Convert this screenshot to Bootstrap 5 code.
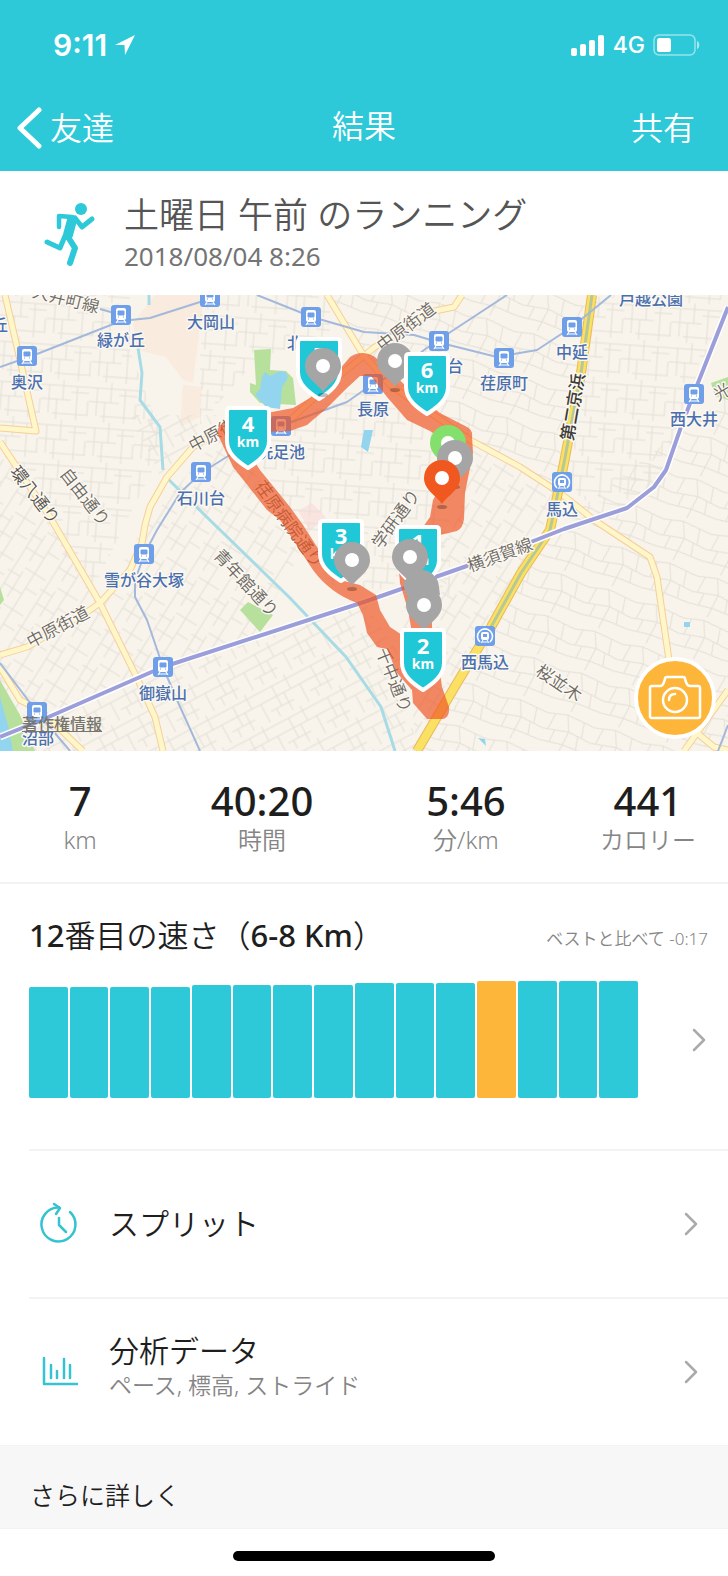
<!DOCTYPE html>
<html lang="ja">
<head>
<meta charset="utf-8">
<meta name="viewport" content="width=device-width, initial-scale=1">
<title>結果</title>
<link href="https://cdn.jsdelivr.net/npm/bootstrap@5.3.0/dist/css/bootstrap.min.css" rel="stylesheet">
<style>
  :root { --teal: #2dc9d9; --amber: #feb63a; --ink: #1e1e1e; --muted: #858585; --line: #f3f3f4; }
  body { font-family: "Noto Sans", "Noto Sans CJK JP", sans-serif; color: var(--ink); background: #fff; }
  a { color: inherit; text-decoration: none; }
  .app-header { background: var(--teal); color: #fff; }
  .status-bar { padding: 24px 28px 0 53px; height: 66px; font-family: Inter, "Liberation Sans", sans-serif; }
  .clock { font-size: 30px; font-weight: 600; line-height: 42px; }
  .network { font-size: 23px; font-weight: 500; line-height: 42px; }
  .title-bar { height: 105px; padding: 38px 17px 0; font-size: 32px; line-height: 48px; font-weight: 350; }
  .title-bar h1 { font-size: 32px; line-height: 44px; font-weight: 350; }
  .share-btn { font-weight: 350; }
  .title-side { flex: 1 1 0; }
  .run-head { padding: 20px 24px 20px 40px; height: 124px; }
  .run-icon { width: 56px; margin-right: 28px; }
  .run-title { font-size: 35px; line-height: 48px; font-weight: 350; color: #555; }
  .run-date { font-size: 26px; line-height: 34px; color: #747474; }
  .map-svg { display: block; width: 100%; height: auto; }
  .station { font-size: 16px; font-weight: 500; fill: #4a6fae; text-anchor: middle; }
  .street { font-size: 17px; font-weight: 350; fill: #6d6962; text-anchor: middle; }
  .halo { stroke: #fbf8f2; stroke-width: 3px; paint-order: stroke; stroke-linejoin: round; }
  .km-num { font-size: 22px; font-weight: 700; fill: #fff; text-anchor: middle; }
  .km-unit { font-size: 14px; font-weight: 700; fill: #fff; text-anchor: middle; }
  .map-legal { left: 22px; bottom: 15px; font-size: 16px; line-height: 24px; font-weight: 500; color: #77756b; text-decoration: underline; }
  .camera-btn { right: 12px; bottom: 12px; width: 82px; height: 82px; background: var(--amber); border: 4px solid #fff; }
  .stats { padding: 24px 0 24px; height: 133px; border-bottom: 2px solid var(--line); }
  .stat-side { flex: 0 0 22%; }
  .stat-mid { flex: 0 0 28%; }
  .stat-value { font-size: 40px; line-height: 52px; font-weight: 500; }
  .stat-label { font-size: 24px; line-height: 26px; font-weight: 350; color: var(--muted); }
  .pace { padding: 29px 20px 51px 29px; }
  .pace h2 { font-size: 31px; line-height: 44px; font-weight: 350; }
  .pace h2 span { font-weight: 500; }
  .best { font-size: 17px; line-height: 24px; font-weight: 350; color: var(--muted); }
  .chart { height: 117px; gap: 2px; margin-right: 54px; }
  .pace-bar { flex: 1 1 0; background: var(--teal); border-radius: 2px; }
  .pace-bar.current { background: var(--amber); }
  .menu-row { margin-left: 29px; padding-right: 29px; height: 148px; border-top: 2px solid var(--line); }
  .menu-icon { width: 60px; flex: none; margin-right: 20px; }
  .menu-title { font-size: 30px; line-height: 40px; font-weight: 350; }
  .menu-note { font-size: 23px; line-height: 28px; font-weight: 350; color: var(--muted); }
  .menu-pair { padding-bottom: 14px; }
  .more { background: #f7f7f7; border: solid var(--line); border-width: 1px 0; padding: 31px 30px 15px; }
  .more h2 { font-size: 25px; line-height: 36px; font-weight: 350; }
  .home-area { padding: 22px 0 16px; }
  .home-pill { width: 36%; height: 10px; border-radius: 5px; background: #000; }
</style>
</head>
<body>

<header class="app-header">
  <div class="status-bar d-flex justify-content-between">
    <div class="d-flex align-items-center">
      <span class="clock">9:11</span>
      <svg class="ms-2" width="20" height="22" viewBox="0 0 20 22" aria-hidden="true"><path d="M20 1 0 11h9.500l.5 10z" fill="#fff"/></svg>
    </div>
    <div class="d-flex align-items-center">
      <svg width="34" height="22" viewBox="0 0 34 22" fill="#fff" aria-hidden="true"><rect y="14" width="6" height="8" rx="2"/><rect x="9" y="10" width="6" height="12" rx="2"/><rect x="18" y="6" width="6" height="16" rx="2"/><rect x="27" y="1" width="6" height="21" rx="2"/></svg>
      <span class="network ms-2 me-2">4G</span>
      <svg width="47" height="22" viewBox="0 0 47 22" aria-hidden="true"><rect x="1" y="1" width="41" height="20" rx="5" fill="none" stroke="#fff" stroke-opacity=".5" stroke-width="1.500"/><rect x="4" y="4" width="14" height="14" rx="2.500" fill="#fff"/><path d="M44 7c3 1 3 7 0 8z" fill="#fff" fill-opacity=".6"/></svg>
    </div>
  </div>
  <nav class="title-bar d-flex align-items-start">
    <a href="#" class="title-side d-flex align-items-center">
      <svg class="me-2" width="25" height="42" viewBox="0 0 25 42" aria-hidden="true"><path d="M22 3 3 21l19 18" fill="none" stroke="#fff" stroke-width="5" stroke-linecap="round" stroke-linejoin="round"/></svg>友達
    </a>
    <h1 class="m-0 flex-shrink-0">結果</h1>
    <div class="title-side text-end"><button type="button" class="share-btn border-0 bg-transparent p-0 me-3 text-white">共有</button></div>
  </nav>
</header>

<main>
  <section class="run-head d-flex align-items-start">
    <svg class="run-icon flex-shrink-0" width="56" height="84" viewBox="0 0 56 84" fill="none" stroke="#2dc9d9" stroke-linecap="round" stroke-linejoin="round" aria-hidden="true">
      <circle cx="41" cy="18" r="6" fill="#2dc9d9" stroke="none"/>
      <path d="M19 36V25l13 1" stroke-width="4.500"/>
      <path d="m35 27 7 9 10-8" stroke-width="5"/>
      <path d="M32 29 28 44" stroke-width="10"/>
      <path d="M25 45 20 57 7 51" stroke-width="5"/>
      <path d="m28 46 7 11-5 15" stroke-width="6"/>
    </svg>
    <div>
      <div class="run-title">土曜日 午前 のランニング</div>
      <div class="run-date">2018/08/04 8:26</div>
    </div>
  </section>

  <section class="position-relative" aria-label="ルート地図">
    <svg class="map-svg" viewBox="0 0 728 456">
      <defs>
        <pattern id="blocksA" width="48" height="40" patternUnits="userSpaceOnUse" patternTransform="rotate(4)">
          <path d="M0 6H48M0 20H30M12 34H48M8 6V34M22 0V20M36 6V40M47 20V34M30 12H48M16 20V40" fill="none" stroke="#e2dfd7" stroke-width="1"/>
        </pattern>
        <pattern id="blocksB" width="44" height="36" patternUnits="userSpaceOnUse" patternTransform="rotate(-28)">
          <path d="M0 5H44M0 16H44M0 27H26M12 5V27M28 0V16M38 16V36M20 16V36M6 27V36" fill="none" stroke="#e2dfd7" stroke-width="1"/>
        </pattern>
        <pattern id="blocksC" width="42" height="38" patternUnits="userSpaceOnUse" patternTransform="rotate(-58)">
          <path d="M0 4H42M0 14H30M0 25H42M10 4V25M24 0V14M34 14V38M17 25V38" fill="none" stroke="#e2dfd7" stroke-width="1"/>
        </pattern>
        <pattern id="blocksD" width="50" height="44" patternUnits="userSpaceOnUse" patternTransform="rotate(18)">
          <path d="M0 8 20 4 50 8M0 24 26 20 50 24M20 4 26 20 22 44M8 7 5 23M38 6 40 22M0 36 24 34 50 36M36 22 38 35M12 22 10 35" fill="none" stroke="#e2dfd7" stroke-width="1"/>
        </pattern>
        <g id="train">
          <rect x="-10" y="-10" width="20" height="20" rx="3" fill="#6f9fe8"/>
          <rect x="-5" y="-7" width="10" height="12" rx="2" fill="#fff"/>
          <path d="M-3-4H3V0H-3zM-3 2h1M2 2h1" fill="#6f9fe8" stroke="#6f9fe8" stroke-width="1"/>
          <path d="m-3 5-2 3M3 5l2 3M-4 7H4" stroke="#fff" stroke-width="1.200"/>
        </g>
        <g id="metro">
          <rect x="-10" y="-10" width="20" height="20" rx="3" fill="#6f9fe8"/>
          <path d="M-5 6a7.500 7.500 0 1 1 10 0" fill="none" stroke="#fff" stroke-width="1.600"/>
          <rect x="-4" y="-4" width="8" height="8" rx="2" fill="#fff"/>
          <path d="M-2-2H2V1H-2z" fill="#6f9fe8"/><path d="m-2 4-2 3M2 4l2 3M-3 6H3" stroke="#fff"/>
        </g>
        <g id="shield">
          <path d="M-18-30H18Q21-30 21-27V3C21 15 11 23 0 30-11 23-21 15-21 3V-27Q-21-30-18-30Z" fill="#20c7d6" stroke="#fff" stroke-width="4" stroke-linejoin="round"/>
        </g>
        <g id="pin">
          <ellipse cx="0" cy="29" rx="5" ry="2" fill="#000" opacity=".25"/>
          <path d="M0 26C-5 18-18 12-18 0A18 18 0 0 1 18 0C18 12 5 18 0 26Z"/>
          <circle r="7" fill="#fff"/>
        </g>
      </defs>

      <rect width="728" height="456" fill="#f8f4ec"/>
      <path d="M155 0H204L193 88 183 85 166 62 137 55 133 28zM183 90 202 92 200 122 180 132z" fill="#f9ebdd"/>
      <path d="M298 216 312 208 326 222 310 236z" fill="#fbe4df"/>
      <path d="M0 0H130V55L165 150 90 300 0 150zM200 0H330V50L260 60 200 130z" fill="url(#blocksA)"/>
      <path d="M0 150 100 308 145 230 227 132 240 150 300 260 250 345 160 370 0 440z" fill="url(#blocksC)"/>
      <path d="M130 120H220L160 180zM160 372 364 307 400 360 417 456H0V440z" fill="url(#blocksB)"/>
      <path d="M330 0H592L575 110 560 200 470 145 365 65z" fill="url(#blocksD)"/>
      <path d="M592 0H728V12L666 175 627 213 560 200zM250 150 360 90 450 150V300L330 290z" fill="url(#blocksA)"/>
      <path d="M470 145 560 200 417 456 400 300 460 220z" fill="url(#blocksC)"/>
      <path d="M556 232 728 100V456H417z" fill="url(#blocksD)"/>

      <path d="M254 55 271 54 270 75 286 76 293 83 296 110 260 108 250 97 250 88 256 90zM240 315 248 307 273 320 260 337zM711 88 728 82V105L715 101zM0 385 20 420 35 456H0zM0 292 4 305 0 310z" fill="#b6e09c"/>
      <path d="M262 82 265 77 270 81 280 76 286 77 288 83 282 92 281 105 280 114 266 112 255 100 260 94zM364 135 373 135 368 157 361 152zM0 402 8 430 13 456H0zM684 327h6v5h-6zM478 443l7 1 1 7z" fill="#93d5ee"/>
      <path d="M138 53 142 78 140 105 160 132 163 175M149 0V10M167 183 218 233 290 303 346 362 381 412 395 456" fill="none" stroke="#a7dbe5" stroke-width="3"/>

      <g fill="none" stroke-linejoin="round">
        <path d="M5 0 20 65 36 136 0 133M0 147 20 177 50 222 100 308 138 385 155 422 163 456M0 360 27 352 90 315 100 308 130 275 142 248 145 230 150 212 167 182 193 152 227 132 290 125 340 80 375 52 430 17 454 12 462 0M327 0 362 58 390 90 470 145 520 172 560 198 594 225 650 262 657 282 670 372M728 395 697 438 684 456M697 438 714 452 728 455M0 372 20 405 40 415 83 456" stroke="#f5cf98" stroke-width="7"/>
        <path d="M5 0 20 65 36 136 0 133M0 147 20 177 50 222 100 308 138 385 155 422 163 456M0 360 27 352 90 315 100 308 130 275 142 248 145 230 150 212 167 182 193 152 227 132 290 125 340 80 375 52 430 17 454 12 462 0M327 0 362 58 390 90 470 145 520 172 560 198 594 225 650 262 657 282 670 372M728 395 697 438 684 456M697 438 714 452 728 455M0 372 20 405 40 415 83 456" stroke="#fff6ca" stroke-width="5"/>
        <path d="M592 0 581 78 564 168 557 202 550 235 521 278 491 332 457 388 417 456" stroke="#e9b95a" stroke-width="10"/>
        <path d="M592 0 581 78 564 168 557 202 550 235 521 278 491 332 457 388 417 456" stroke="#fae063" stroke-width="8"/>
        <path d="M592 0 581 78 564 168 557 202 550 235 521 278 491 332" stroke="#b8c894" stroke-width="3"/>
        <path d="M0 72 37 59 121 26 150 23 200 7 215 0M257 0 312 22 364 37 414 40 441 48 497 62 537 55 572 32 611 0M507 0 449 38 424 55 400 75 364 95 347 107 283 130 233 158 201 178 180 198 157 235 145 258 135 285 135 302 147 325 163 372 177 405 200 456M0 368 37 417 70 456M100 14 121 20M728 430 718 456" stroke="#a4b8dc" stroke-width="2"/>
        <path d="M0 442 37 427 163 372 364 307 464 272 536 245 564 234 627 213 654 192 666 175 681 132 694 98 728 12" stroke="#fff" stroke-width="7"/>
        <path d="M0 442 37 427 163 372 364 307 464 272 536 245 564 234 627 213 654 192 666 175 681 132 694 98 728 12" stroke="#9b9ed9" stroke-width="4"/>
      </g>

      <g>
        <use href="#train" x="121" y="20"/><use href="#train" x="210" y="2"/><use href="#train" x="311" y="22"/>
        <use href="#train" x="27" y="61"/><use href="#train" x="281" y="131"/><use href="#train" x="201" y="177"/>
        <use href="#train" x="373" y="89"/><use href="#train" x="439" y="46"/><use href="#train" x="504" y="63"/>
        <use href="#train" x="572" y="32"/><use href="#train" x="694" y="99"/><use href="#metro" x="562" y="187"/>
        <use href="#metro" x="485" y="341"/><use href="#train" x="144" y="259"/><use href="#train" x="163" y="372"/>
        <use href="#train" x="37" y="417"/>
      </g>

      <g class="street halo">
        <text transform="translate(66 4) rotate(14)" y="6">大井町線</text>
        <text transform="translate(406 32) rotate(-37)" y="6">中原街道</text>
        <text transform="translate(220 136) rotate(-28)" y="6">中原街道</text>
        <text transform="translate(58 332) rotate(-28)" y="6">中原街道</text>
        <text transform="translate(35 200) rotate(52)" y="6" fill="#55524c">環八通り</text>
        <text transform="translate(85 202) rotate(52)" y="6">自由通り</text>
        <text transform="translate(246 288) rotate(47)" y="6">青年館通り</text>
        <text transform="translate(396 224) rotate(-54)" y="6">学研通り</text>
        <text transform="translate(500 260) rotate(-20)" y="6">横須賀線</text>
        <text transform="translate(559 388) rotate(34)" y="6">桜並木</text>
        <text transform="translate(394 385) rotate(68)" y="6">千中通り</text>
        <text transform="translate(573 112) rotate(-80)" y="6" fill="#3e3c36" font-weight="500">第二京浜</text>
        <text transform="translate(722 97) rotate(-30)" y="6">光</text>
        <text transform="translate(289 229) rotate(54)" y="6">荏原病院通り</text>
      </g>
      <g class="station halo">
        <text x="0" y="36">丘</text><text x="121" y="51">緑が丘</text><text x="211" y="33">大岡山</text>
        <text x="295" y="54">北</text><text x="27" y="93">奥沢</text><text x="281" y="163">洗足池</text>
        <text x="201" y="209">石川台</text><text x="373" y="120">長原</text><text x="455" y="77">台</text>
        <text x="504" y="94">荏原町</text><text x="572" y="63">中延</text><text x="651" y="10">戸越公園</text>
        <text x="694" y="130">西大井</text><text x="562" y="220">馬込</text><text x="485" y="373">西馬込</text>
        <text x="144" y="291">雪が谷大塚</text><text x="163" y="404">御嶽山</text><text x="38" y="449">沼部</text>
      </g>

      <path fill="#ef5422" fill-opacity=".68" fill-rule="evenodd" d="M218 140Q216 131 224 128L272 117 293 113 310 103 333 82 350 62Q362 54 375 62L407 92 440 118 467 132Q473 135 472 142L473 158 465 198 464 224Q463 233 457 236L440 240 425 262 432 305 432 332 437 355 442 392 449 412Q450 422 443 424H427L413 408 412 395 397 378 387 354 377 352 367 338 363 320 357 308Q330 298 313 275L280 225 267 215 233 172ZM236 138 260 175 290 212 303 230 317 252 340 285 360 290 376 300 380 315 390 332 402 340 412 338 408 315 400 288 398 262 410 240 423 232 430 222 433 205 447 180 447 148 430 136 407 125 387 102 371 81H360L347 93 327 113 307 130 290 136Z"/>

      <use href="#shield" x="319" y="74"/>
      <text class="km-num" x="319" y="68">5</text>
      <use href="#shield" x="341" y="256"/>
      <text class="km-num" x="341" y="249">3</text><text class="km-unit" x="341" y="264">km</text>
      <use href="#shield" x="418" y="262"/>
      <text class="km-num" x="418" y="255">1</text><text class="km-unit" x="418" y="270">km</text>
      <g fill="#a5a5a5">
        <use href="#pin" x="323" y="71"/><use href="#pin" x="395" y="66"/><use href="#pin" x="352" y="265"/>
        <use href="#pin" x="410" y="262"/>
        <path d="M406 300 403 288 411 278A18 18 0 0 1 439 292L440 300z"/>
        <use href="#pin" x="424" y="310"/>
      </g>
      <use href="#shield" x="248" y="143"/>
      <text class="km-num" x="248" y="137">4</text><text class="km-unit" x="248" y="152">km</text>
      <use href="#shield" x="427" y="89"/>
      <text class="km-num" x="427" y="83">6</text><text class="km-unit" x="427" y="98">km</text>
      <use href="#shield" x="423" y="365"/>
      <text class="km-num" x="423" y="359">2</text><text class="km-unit" x="423" y="374">km</text>
      <use href="#pin" x="448" y="148" fill="#83e06c"/>
      <use href="#pin" x="455" y="163" fill="#a5a5a5"/>
      <use href="#pin" x="442" y="183" fill="#f0581f"/>
    </svg>
    <a href="#" class="map-legal position-absolute">著作権情報</a>
    <button type="button" class="camera-btn position-absolute rounded-circle p-0 d-flex align-items-center justify-content-center" aria-label="写真を追加">
      <svg width="54" height="46" viewBox="0 0 54 46" fill="none" stroke="#fff" stroke-width="2.500" stroke-linejoin="round" stroke-linecap="round" aria-hidden="true">
        <path d="M2 13Q2 11 4 11H12Q15 11 16 7L17 4Q17 2 19 2H35Q37 2 37 4L38 7Q39 11 42 11H50Q52 11 52 13V41Q52 43 50 43H4Q2 43 2 41Z"/>
        <circle cx="27" cy="25" r="12"/><path d="M21 25Q21 19 27 19"/>
      </svg>
    </button>
  </section>

  <section class="stats d-flex text-center">
    <div class="stat-side"><div class="stat-value">7</div><div class="stat-label">km</div></div>
    <div class="stat-mid"><div class="stat-value">40:20</div><div class="stat-label">時間</div></div>
    <div class="stat-mid"><div class="stat-value">5:46</div><div class="stat-label">分/km</div></div>
    <div class="stat-side"><div class="stat-value">441</div><div class="stat-label">カロリー</div></div>
  </section>

  <section class="pace">
    <div class="d-flex justify-content-between align-items-center">
      <h2 class="m-0"><span>12</span>番目の速さ（<span>6-8 Km</span>）</h2>
      <div class="best pt-2">ベストと比べて -0:17</div>
    </div>
    <a href="#" class="d-flex align-items-center mt-4" aria-label="速さの詳細">
      <div class="chart d-flex align-items-end flex-grow-1" id="chart"></div>
      <svg width="16" height="24" viewBox="0 0 16 24" aria-hidden="true"><path d="m2 2 10 10L2 22" fill="none" stroke="#aaa" stroke-width="2.500" stroke-linecap="round" stroke-linejoin="round"/></svg>
    </a>
  </section>

  <nav>
    <a href="#" class="menu-row d-flex align-items-center">
      <svg class="menu-icon" width="60" height="44" viewBox="0 0 60 44" fill="none" stroke="#35c3d2" stroke-width="2.500" stroke-linecap="round" stroke-linejoin="round" aria-hidden="true">
        <path d="M41 10A17 17 0 1 1 30 5.500"/><path d="m25 2 6 4-4 6M30 16v7l7 7"/>
      </svg>
      <div class="menu-title flex-grow-1">スプリット</div>
      <svg width="16" height="24" viewBox="0 0 16 24" aria-hidden="true"><path d="m3 2 10 10L3 22" fill="none" stroke="#aaa" stroke-width="2.500" stroke-linecap="round" stroke-linejoin="round"/></svg>
    </a>
    <a href="#" class="menu-row d-flex align-items-center">
      <svg class="menu-icon" width="60" height="44" viewBox="0 0 60 44" fill="none" stroke="#35c3d2" stroke-width="2.500" stroke-linecap="round" stroke-linejoin="round" aria-hidden="true">
        <path d="M15 8v26h33M22 15v13M28 21v7M35 9v19M41 15v13"/>
      </svg>
      <div class="menu-pair flex-grow-1">
        <div class="menu-title">分析データ</div>
        <div class="menu-note">ペース, 標高, ストライド</div>
      </div>
      <svg width="16" height="24" viewBox="0 0 16 24" aria-hidden="true"><path d="m3 2 10 10L3 22" fill="none" stroke="#aaa" stroke-width="2.500" stroke-linecap="round" stroke-linejoin="round"/></svg>
    </a>
  </nav>

  <section class="more"><h2 class="m-0">さらに詳しく</h2></section>
</main>

<footer class="home-area"><div class="home-pill mx-auto"></div></footer>

<script src="https://cdn.jsdelivr.net/npm/bootstrap@5.3.0/dist/js/bootstrap.bundle.min.js"></script>
<script>
  // Relative speed of each run over the same stretch; the current run is the twelfth.
  const runs = [111, 111, 111, 111, 113, 113, 113, 113, 115, 115, 115, 117, 117, 117, 117];
  const highest = Math.max(...runs);
  document.getElementById('chart').innerHTML = runs
    .map((v, i) => `<div class="pace-bar${i === 11 ? ' current' : ''}" style="height:${v / highest * 100}%"></div>`)
    .join('');
</script>
</body>
</html>
